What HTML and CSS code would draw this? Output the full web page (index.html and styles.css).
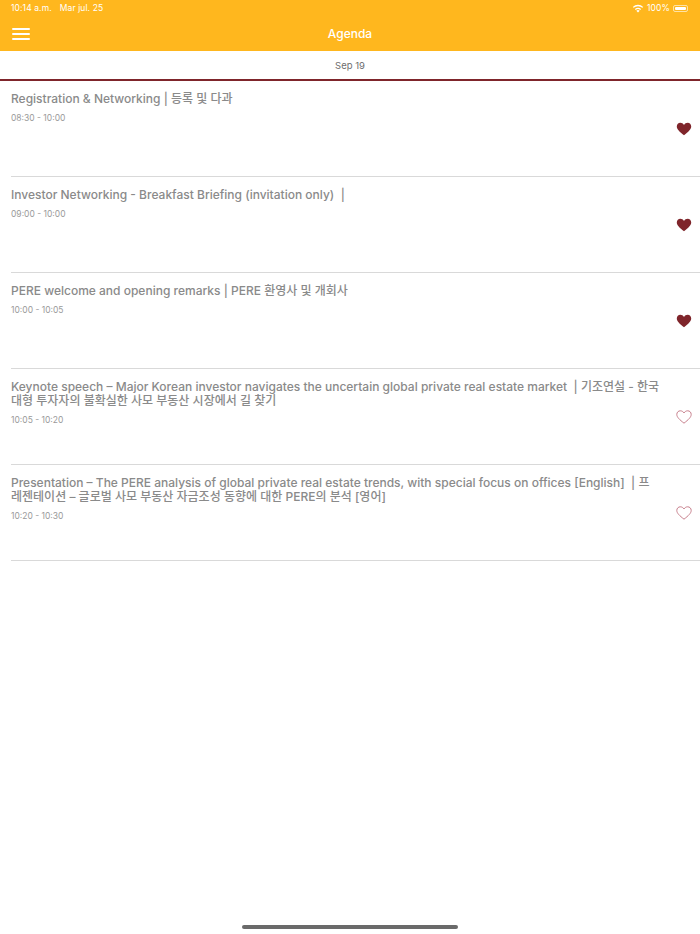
FILE: index.html
```html
<!DOCTYPE html>
<html lang="ko">
<head>
  <meta charset="UTF-8">
  <title>Agenda</title>
  <link rel="stylesheet" href="styles.css">
</head>
<body>
  <div class="app">
    <header class="topbar">
      <div class="status">
        <div class="status-left">
          <span>10:14 a.m.</span>
          <span>Mar jul. 25</span>
        </div>
        <div class="status-right">
          <svg class="wifi" viewBox="0 0 12 9" width="12" height="9">
            <path d="M6 8.6 4.3 6.7a2.5 2.5 0 0 1 3.4 0Z" fill="#fff"/>
            <path d="M3.3 5.6a4 4 0 0 1 5.4 0" fill="none" stroke="#fff" stroke-width="1.3"/>
            <path d="M1.2 3.4a7 7 0 0 1 9.6 0" fill="none" stroke="#fff" stroke-width="1.3"/>
          </svg>
          <span>100%</span>
          <span class="battery"><span class="battery-fill"></span></span>
        </div>
      </div>
      <div class="navrow">
        <div class="menu-btn"><span></span><span></span><span></span></div>
        <h1>Agenda</h1>
      </div>
    </header>

    <div class="datebar">Sep 19</div>

    <ul class="agenda">
      <li class="session">
        <div class="session-text">
          <h2>Registration &amp; Networking | 등록 및 다과</h2>
          <p>08:30 - 10:00</p>
        </div>
        <svg class="heart" viewBox="0 0 16 14" width="16" height="14"><path class="on" d="M8 13.2C3.5 9.6.8 7.2.8 4.4.8 2.300 2.400.8 4.300.8 5.800.8 7.200 1.600 8 3c.8-1.400 2.200-2.200 3.700-2.200 1.900 0 3.500 1.500 3.500 3.600 0 2.800-2.700 5.200-7.200 8.800Z"/></svg>
      </li>
      <li class="session">
        <div class="session-text">
          <h2>Investor Networking - Breakfast Briefing (invitation only) &nbsp;|</h2>
          <p>09:00 - 10:00</p>
        </div>
        <svg class="heart" viewBox="0 0 16 14" width="16" height="14"><path class="on" d="M8 13.2C3.5 9.6.8 7.2.8 4.4.8 2.300 2.400.8 4.300.8 5.800.8 7.200 1.600 8 3c.8-1.400 2.200-2.200 3.700-2.200 1.900 0 3.500 1.500 3.500 3.600 0 2.800-2.700 5.200-7.200 8.800Z"/></svg>
      </li>
      <li class="session">
        <div class="session-text">
          <h2>PERE welcome and opening remarks | PERE 환영사 및 개회사</h2>
          <p>10:00 - 10:05</p>
        </div>
        <svg class="heart" viewBox="0 0 16 14" width="16" height="14"><path class="on" d="M8 13.2C3.5 9.6.8 7.2.8 4.4.8 2.300 2.400.8 4.300.8 5.800.8 7.200 1.600 8 3c.8-1.400 2.200-2.200 3.700-2.200 1.900 0 3.500 1.500 3.500 3.600 0 2.800-2.700 5.200-7.200 8.800Z"/></svg>
      </li>
      <li class="session">
        <div class="session-text">
          <h2>Keynote speech – Major Korean investor navigates the uncertain global private real estate market &nbsp;| 기조연설 - 한국 대형 투자자의 불확실한 사모 부동산 시장에서 길 찾기</h2>
          <p>10:05 - 10:20</p>
        </div>
        <svg class="heart" viewBox="0 0 16 14" width="16" height="14"><path class="off" d="M8 13.2C3.5 9.6.8 7.2.8 4.4.8 2.300 2.400.8 4.300.8 5.800.8 7.200 1.600 8 3c.8-1.400 2.200-2.200 3.700-2.200 1.900 0 3.500 1.500 3.500 3.600 0 2.800-2.700 5.200-7.200 8.800Z"/></svg>
      </li>
      <li class="session">
        <div class="session-text">
          <h2>Presentation – The PERE analysis of global private real estate trends, with special focus on offices [English] &nbsp;| 프레젠테이션 – 글로벌 사모 부동산 자금조성 동향에 대한 PERE의 분석 [영어]</h2>
          <p>10:20 - 10:30</p>
        </div>
        <svg class="heart" viewBox="0 0 16 14" width="16" height="14"><path class="off" d="M8 13.2C3.5 9.6.8 7.2.8 4.4.8 2.300 2.400.8 4.300.8 5.800.8 7.200 1.600 8 3c.8-1.400 2.200-2.200 3.700-2.200 1.900 0 3.500 1.500 3.500 3.600 0 2.800-2.700 5.200-7.200 8.800Z"/></svg>
      </li>
    </ul>

    <div class="home-row"><div class="home-bar"></div></div>
  </div>
</body>
</html>
```

FILE: styles.css
```css
html, body {
  margin: 0;
  padding: 0;
}
body {
  font-family: Inter, "Noto Sans CJK KR", sans-serif;
  background: #fff;
}
.app {
  width: 700px;
  height: 934px;
  display: flex;
  flex-direction: column;
  overflow: hidden;
}
.topbar {
  background: #ffb71e;
  color: #fff;
  height: 51px;
  flex: none;
}
.status {
  height: 16px;
  padding: 0 11px;
  display: flex;
  justify-content: space-between;
  align-items: center;
  font-size: 8.5px;
  letter-spacing: 0.1px;
}
.status-left {
  display: flex;
  gap: 8px;
}
.status-right {
  display: flex;
  align-items: center;
  gap: 3px;
  padding-right: 1px;
}
.battery {
  width: 15px;
  height: 7px;
  border: 1px solid rgba(255,255,255,0.6);
  border-radius: 2px;
  padding: 1px;
  box-sizing: border-box;
  display: flex;
}
.battery-fill {
  flex: 1;
  background: #fff;
  border-radius: 1px;
}
.navrow {
  height: 35px;
  position: relative;
  display: flex;
  align-items: center;
  justify-content: center;
}
.navrow h1 {
  margin: 0;
  font-size: 12px;
  font-weight: 500;
}
.menu-btn {
  position: absolute;
  left: 12px;
  top: 12px;
  width: 18px;
  display: flex;
  flex-direction: column;
  gap: 3px;
}
.menu-btn span {
  display: block;
  height: 2px;
  background: #fff;
  border-radius: 1px;
}
.datebar {
  height: 28px;
  flex: none;
  display: flex;
  align-items: center;
  justify-content: center;
  font-size: 9.5px;
  color: #6e6e6e;
  border-bottom: 2px solid #7f252b;
}
.agenda {
  list-style: none;
  margin: 0;
  padding: 0 0 0 11px;
}
.session {
  height: 95px;
  border-bottom: 1px solid #d9d9d9;
  position: relative;
  box-sizing: content-box;
}
.session-text {
  padding: 11px 40px 0 0;
}
.session h2 {
  margin: 0;
  font-size: 12px;
  font-weight: 500;
  line-height: 14px;
  color: #8a8a8a;
}
.session p {
  margin: 6px 0 0;
  font-size: 8.5px;
  line-height: 12px;
  color: #9a9a9a;
}
.heart {
  position: absolute;
  right: 8px;
  top: 41px;
}
.heart .on {
  fill: #7f252b;
}
.heart .off {
  fill: none;
  stroke: #c77f8c;
  stroke-width: 1;
}
.home-row {
  flex: 1;
  display: flex;
  align-items: flex-end;
  justify-content: center;
  padding-bottom: 5px;
}
.home-bar {
  width: 216px;
  height: 4px;
  background: #6a6a6a;
  border-radius: 2px;
}
```
